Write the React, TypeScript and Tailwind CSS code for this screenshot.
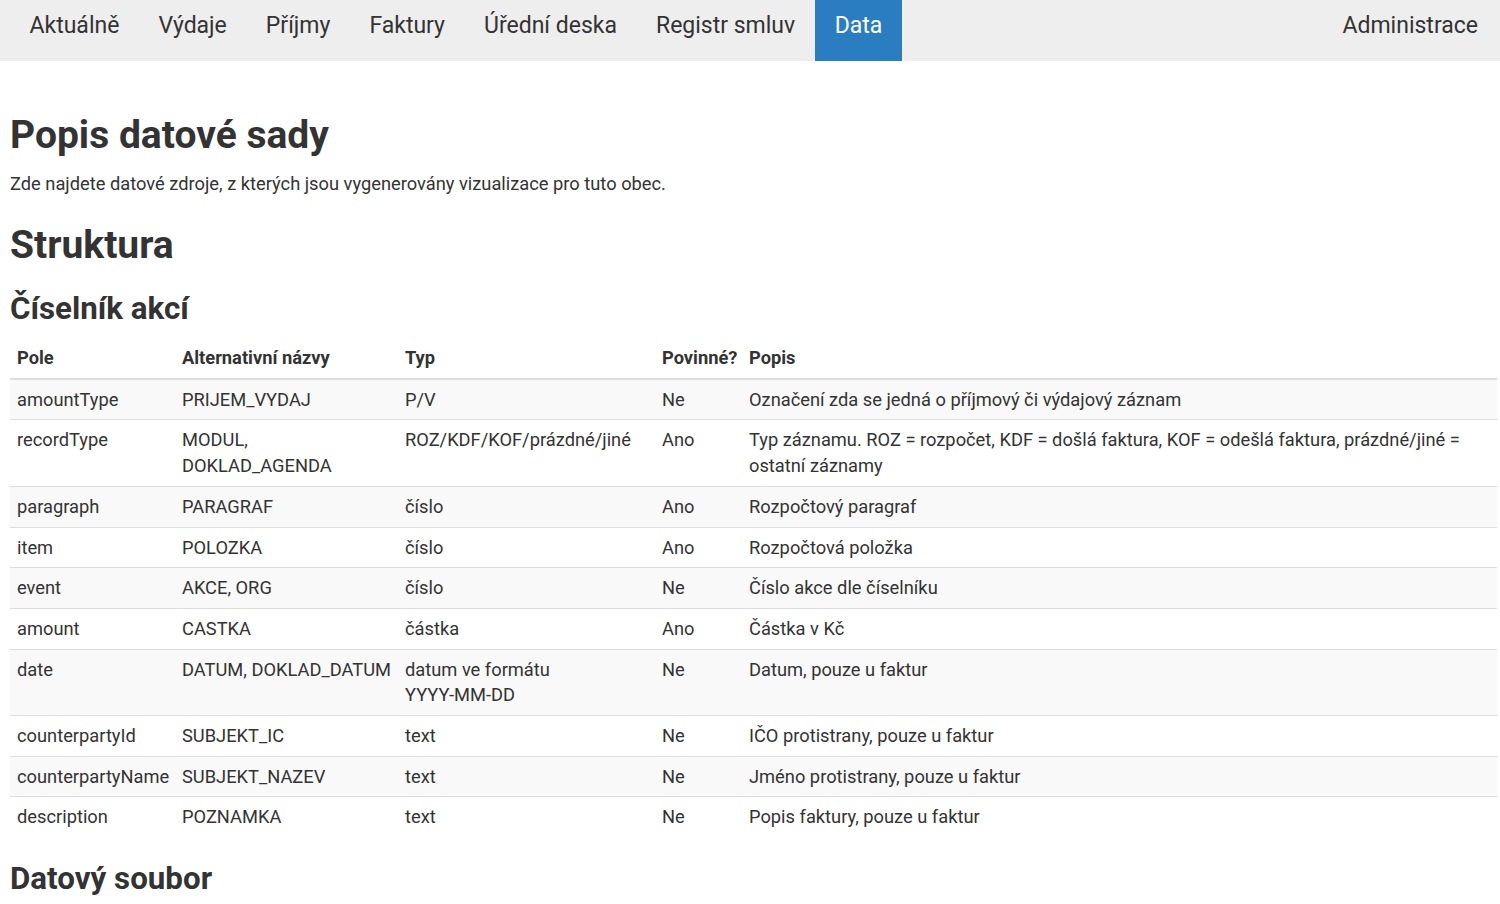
import React from "react";

const rows: [string, React.ReactNode, React.ReactNode, string, string][] = [
  ["amountType", "PRIJEM_VYDAJ", "P/V", "Ne", "Označení zda se jedná o příjmový či výdajový záznam"],
  ["recordType", "MODUL, DOKLAD_AGENDA", "ROZ/KDF/KOF/prázdné/jiné", "Ano", "Typ záznamu. ROZ = rozpočet, KDF = došlá faktura, KOF = odešlá faktura, prázdné/jiné = ostatní záznamy"],
  ["paragraph", "PARAGRAF", "číslo", "Ano", "Rozpočtový paragraf"],
  ["item", "POLOZKA", "číslo", "Ano", "Rozpočtová položka"],
  ["event", "AKCE, ORG", "číslo", "Ne", "Číslo akce dle číselníku"],
  ["amount", "CASTKA", "částka", "Ano", "Částka v Kč"],
  ["date", "DATUM, DOKLAD_DATUM", <>datum ve formátu <span className="whitespace-nowrap">YYYY-MM-DD</span></>, "Ne", "Datum, pouze u faktur"],
  ["counterpartyId", "SUBJEKT_IC", "text", "Ne", "IČO protistrany, pouze u faktur"],
  ["counterpartyName", "SUBJEKT_NAZEV", "text", "Ne", "Jméno protistrany, pouze u faktur"],
  ["description", "POZNAMKA", "text", "Ne", "Popis faktury, pouze u faktur"],
];

const nav = ["Aktuálně", "Výdaje", "Příjmy", "Faktury", "Úřední deska", "Registr smluv"];

export default function App() {
  return (
    <div className="min-h-[904px] bg-white text-[#333] font-['Roboto',sans-serif]">
      <nav className="flex h-[61px] bg-[#eeeeee] pl-[10px] pr-[2px] text-[23px] leading-[30px]">
        {nav.map((n) => (
          <a key={n} className="px-[19.5px] pt-[11px] text-[#333]">{n}</a>
        ))}
        <a className="bg-[#2a7dc1] px-[20px] pt-[11px] text-white">Data</a>
        <div className="flex-1" />
        <a className="px-[20px] pt-[11px] text-[#333]">Administrace</a>
      </nav>
      <main className="pl-[10px] pr-[3px]">
        <h1 className="mt-[50px] text-[39px] font-bold leading-[48px]">Popis datové sady</h1>
        <p className="mt-[12px] text-[18.3px] leading-[26px]">Zde najdete datové zdroje, z kterých jsou vygenerovány vizualizace pro tuto obec.</p>
        <h2 className="mt-[24px] text-[39px] font-bold leading-[48px]">Struktura</h2>
        <h3 className="mt-[20px] text-[31.3px] font-bold leading-[40px]">Číselník akcí</h3>
        <table className="mt-[9px] w-full table-fixed border-collapse text-[18.3px] leading-[25.7px]">
          <colgroup>
            <col className="w-[165px]" />
            <col className="w-[223px]" />
            <col className="w-[257px]" />
            <col className="w-[87px]" />
            <col />
          </colgroup>
          <thead>
            <tr className="border-b-2 border-[#dddddd]">
              {["Pole", "Alternativní názvy", "Typ", "Povinné?", "Popis"].map((h) => (
                <th key={h} className="px-[7px] py-[7px] text-left align-bottom font-bold whitespace-nowrap">{h}</th>
              ))}
            </tr>
          </thead>
          <tbody>
            {rows.map((r, i) => (
              <tr key={r[0]} className={`border-t border-[#dddddd] ${i % 2 === 0 ? "bg-[#f9f9f9]" : "bg-white"}`}>
                {r.map((c, j) => (
                  <td key={j} className="px-[7px] py-[7px] align-top">{c}</td>
                ))}
              </tr>
            ))}
          </tbody>
        </table>
        <h3 className="mt-[22px] text-[31.3px] font-bold leading-[40px]">Datový soubor</h3>
      </main>
    </div>
  );
}
